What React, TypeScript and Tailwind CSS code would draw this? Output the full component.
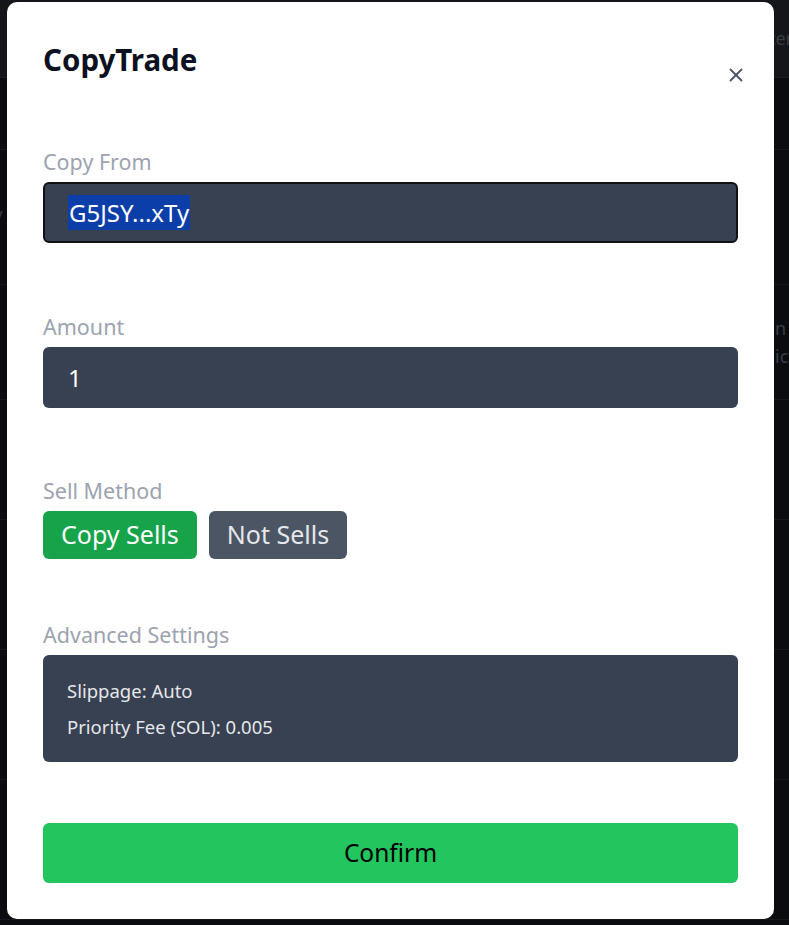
import { X } from "lucide-react";

const rows = [
  { h: "h-[72px]", a: "", b: "" },
  { h: "h-[135px]", a: "/", b: "" },
  { h: "h-[115px]", a: "", b: "n ic" },
  { h: "h-[120px]", a: "", b: "" },
  { h: "h-[130px]", a: "", b: "" },
  { h: "h-[130px]", a: "", b: "" },
  { h: "h-[140px]", a: "", b: "" },
];

function Backdrop() {
  return (
    <div className="absolute inset-0 bg-[#0b0c10] text-[#3a3d44] font-['Noto_Sans',sans-serif]">
      <div className="flex h-[78px] items-center justify-between border-b border-[#1c1e23] bg-[#14161a] text-[18px]">
        <span className="-ml-2">c</span>
        <span className="-mr-1">ter</span>
      </div>
      {rows.map((r, i) => (
        <div key={i} className={`flex ${r.h} items-center justify-between border-b border-[#15171b]`}>
          <span className="-ml-1 text-[18px]">{r.a}</span>
          <span className="w-[14px] text-[18px] leading-[28px] break-all">{r.b}</span>
        </div>
      ))}
      <div className="flex gap-[130px] pl-[66px] text-[20px] text-[#1f5a33]">
        <span>10K%</span>
        <span>$1,030.4</span>
        <span className="text-[#44474d]">100%</span>
      </div>
    </div>
  );
}

export default function App() {
  return (
    <div className="relative h-[925px] w-[789px] overflow-hidden">
      <Backdrop />
      <div className="absolute left-[7px] top-[2px] flex h-[917px] w-[767px] flex-col rounded-[10px] bg-white px-[36px] font-['Noto_Sans',sans-serif]">
        <div className="flex items-start justify-between pt-[37px]">
          <h2 className="text-[29.5px] font-bold leading-[42px] text-[#0b1120]">CopyTrade</h2>
          <button className="mt-[25px] -mr-[9px] text-[#4b5563]">
            <X size={22} strokeWidth={2} />
          </button>
        </div>

        <div className="mt-[61px]">
          <div className="text-[21.5px] leading-[30px] text-[#9ca3af]">Copy From</div>
          <div className="mt-[5px] flex h-[61px] items-center rounded-md border-2 border-[#111] bg-[#374151] pl-[23px]">
            <span className="bg-[#0b3ea8] px-[1px] text-[24px] leading-[35px] text-white">G5JSY...xTy</span>
          </div>
        </div>

        <div className="mt-[69px]">
          <div className="text-[21.5px] leading-[30px] text-[#9ca3af]">Amount</div>
          <div className="mt-[5px] flex h-[61px] items-center rounded-md bg-[#374151] pl-[25px]">
            <span className="text-[24px] text-white">1</span>
          </div>
        </div>

        <div className="mt-[68px]">
          <div className="text-[21.5px] leading-[30px] text-[#9ca3af]">Sell Method</div>
          <div className="mt-[5px] flex gap-[12px]">
            <button className="h-[48px] rounded-md bg-[#16a34a] px-[18px] text-[25px] text-white">Copy Sells</button>
            <button className="h-[48px] rounded-md bg-[#4b5563] px-[18px] text-[25px] text-[#e5e7eb]">Not Sells</button>
          </div>
        </div>

        <div className="mt-[61px]">
          <div className="text-[21.5px] leading-[30px] text-[#9ca3af]">Advanced Settings</div>
          <div className="mt-[5px] flex h-[107px] flex-col justify-center gap-[9px] rounded-md bg-[#374151] pl-[24px] text-[18.5px] leading-[27px] text-[#e5e7eb]">
            <div>Slippage: Auto</div>
            <div>Priority Fee (SOL): 0.005</div>
          </div>
        </div>

        <button className="mt-[61px] h-[60px] w-full rounded-md bg-[#22c55e] text-[24.5px] text-black">Confirm</button>
      </div>
    </div>
  );
}
